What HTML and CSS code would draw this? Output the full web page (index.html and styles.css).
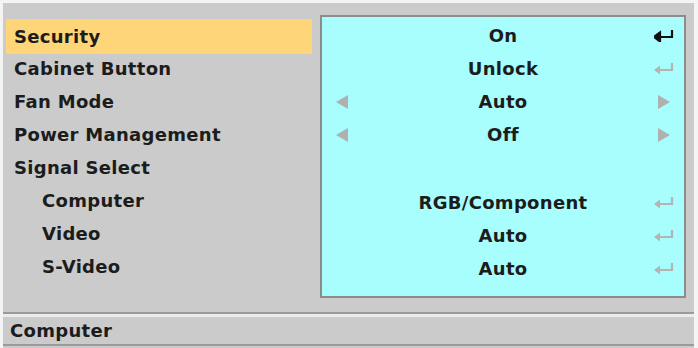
FILE: index.html
```html
<!DOCTYPE html>
<html>
<head>
<title>Setup</title>
<link rel="stylesheet" href="styles.css">
</head>
<body>
<div class="osd">
  <div class="main">
    <div class="menu">
      <div class="item selected">Security</div>
      <div class="item">Cabinet Button</div>
      <div class="item">Fan Mode</div>
      <div class="item">Power Management</div>
      <div class="item">Signal Select</div>
      <div class="item sub">Computer</div>
      <div class="item sub">Video</div>
      <div class="item sub">S-Video</div>
    </div>
    <div class="values">
      <div class="row">
        <span class="side"></span><span class="val">On</span>
        <span class="side"><svg class="enter on" viewBox="0 0 20 13"><path d="M18 1 V8 H5"/><path class="head" d="M0 8 L6 3.5 V12.5 Z"/></svg></span>
      </div>
      <div class="row">
        <span class="side"></span><span class="val">Unlock</span>
        <span class="side"><svg class="enter" viewBox="0 0 20 13"><path d="M18 1 V8 H5"/><path class="head" d="M0 8 L6 3.5 V12.5 Z"/></svg></span>
      </div>
      <div class="row">
        <span class="side"><i class="tri left"></i></span><span class="val">Auto</span>
        <span class="side"><i class="tri right"></i></span>
      </div>
      <div class="row">
        <span class="side"><i class="tri left"></i></span><span class="val">Off</span>
        <span class="side"><i class="tri right"></i></span>
      </div>
      <div class="row"></div>
      <div class="row">
        <span class="side"></span><span class="val">RGB/Component</span>
        <span class="side"><svg class="enter" viewBox="0 0 20 13"><path d="M18 1 V8 H5"/><path class="head" d="M0 8 L6 3.5 V12.5 Z"/></svg></span>
      </div>
      <div class="row">
        <span class="side"></span><span class="val">Auto</span>
        <span class="side"><svg class="enter" viewBox="0 0 20 13"><path d="M18 1 V8 H5"/><path class="head" d="M0 8 L6 3.5 V12.5 Z"/></svg></span>
      </div>
      <div class="row">
        <span class="side"></span><span class="val">Auto</span>
        <span class="side"><svg class="enter" viewBox="0 0 20 13"><path d="M18 1 V8 H5"/><path class="head" d="M0 8 L6 3.5 V12.5 Z"/></svg></span>
      </div>
    </div>
  </div>
  <div class="status">Computer</div>
</div>
</body>
</html>
```
FILE: styles.css
```css
body {
    margin: 0;
    background: #f4f4f4;
    font-family: "DejaVu Sans", sans-serif;
    font-weight: bold;
    color: #1c1c1c;
}

.osd {
    width: 691px;
    height: 345px;
    margin: 3px 0 0 3px;
    background: #cbcbcb;
}

.main {
    display: flex;
    gap: 8px;
    height: 311px;
    padding: 12px 0 0 3px;
    box-sizing: border-box;
    border-bottom: 2px solid #9a9a9a;
}

.menu {
    width: 306px;
    padding-top: 4px;
}

.item {
    height: 33px;
    line-height: 33px;
    padding-left: 8px;
    font-size: 18px;
    letter-spacing: 0.3px;
}

.item.selected {
    background: #fed578;
    height: 35px;
    line-height: 35px;
    margin-bottom: -2px;
}

.item.sub {
    padding-left: 36px;
}

.values {
    width: 362px;
    height: 277px;
    background: #a8fdfd;
    border: 2px solid #8c8c8c;
    padding-top: 2px;
}

.row {
    display: flex;
    align-items: center;
    height: 33px;
}

.row:nth-child(6) {
    margin-top: 2px;
}

.val {
    flex: 1;
    text-align: center;
    font-size: 18px;
    letter-spacing: 0.3px;
}

.side {
    width: 40px;
    display: flex;
    justify-content: center;
}

.enter {
    width: 20px;
    height: 13px;
}

.enter path {
    fill: none;
    stroke: #b4b4b4;
    stroke-width: 2.2;
}

.enter .head {
    fill: #b4b4b4;
    stroke: none;
}

.enter.on path {
    stroke: #111;
}

.enter.on .head {
    fill: #111;
}

.tri {
    width: 0;
    height: 0;
    border-top: 7px solid transparent;
    border-bottom: 7px solid transparent;
}

.tri.left {
    border-right: 12px solid #b0b0b0;
}

.tri.right {
    border-left: 12px solid #b0b0b0;
}

.status {
    border-top: 3px solid #ececec;
    border-bottom: 2px solid #9a9a9a;
    height: 27px;
    line-height: 27px;
    padding-left: 7px;
    font-size: 18px;
    letter-spacing: 0.3px;
}
```
